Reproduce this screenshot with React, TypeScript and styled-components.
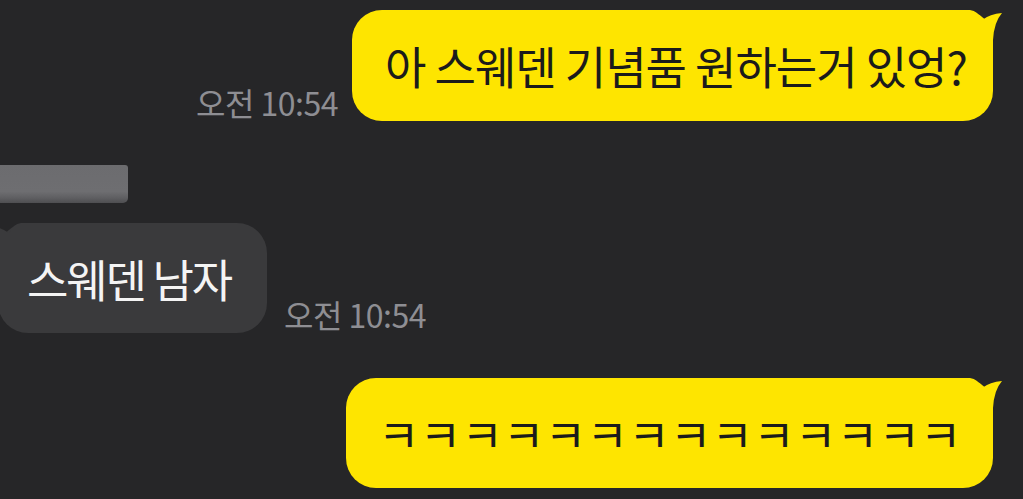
import React from "react";
import styled, { createGlobalStyle } from "styled-components";

const Global = createGlobalStyle`
  html, body { margin: 0; padding: 0; background: #262628; }
  body { font-family: "Noto Sans CJK KR", "Noto Sans", sans-serif; overflow: hidden; }
`;

const Screen = styled.div`
  width: 1023px;
  height: 499px;
  background: #262628;
  display: flex;
  flex-direction: column;
  padding-top: 10px;
  box-sizing: border-box;
  overflow: hidden;
`;

const Row = styled.div<{ $mine?: boolean; $top?: number }>`
  display: flex;
  align-items: flex-end;
  justify-content: ${(p) => (p.$mine ? "flex-end" : "flex-start")};
  gap: ${(p) => (p.$mine ? 14 : 17)}px;
  margin-top: ${(p) => p.$top ?? 0}px;
  padding-right: ${(p) => (p.$mine ? 30 : 0)}px;
  margin-left: ${(p) => (p.$mine ? 0 : -2)}px;
`;

const Bubble = styled.div<{ $mine?: boolean; $w: number; $h: number; $pad: number; $ls: number }>`
  position: relative;
  width: ${(p) => p.$w}px;
  height: ${(p) => p.$h}px;
  box-sizing: border-box;
  border-radius: 30px;
  background: ${(p) => (p.$mine ? "#fee500" : "#3a3a3c")};
  color: ${(p) => (p.$mine ? "#1b1b1b" : "#f4f4f4")};
  display: flex;
  align-items: center;
  padding-left: ${(p) => p.$pad}px;
  font-size: 45px;
  letter-spacing: ${(p) => p.$ls}px;
  white-space: nowrap;
`;

const Text = styled.span`
  position: relative;
  z-index: 1;
`;

const Tail = styled.svg<{ $mine?: boolean }>`
  position: absolute;
  top: 0;
  width: 40px;
  height: 50px;
  ${(p) => (p.$mine ? "right: -10px;" : "left: -10px; transform: scaleX(-1);")}
`;

const Time = styled.span<{ $b: number }>`
  color: #8e8e93;
  font-size: 32px;
  letter-spacing: -0.5px;
  line-height: 1;
  margin-bottom: ${(p) => p.$b}px;
  white-space: nowrap;
`;

const NameBar = styled.div`
  margin-top: 44px;
  width: 128px;
  height: 38px;
  border-radius: 0 3px 5px 0;
  background: linear-gradient(180deg, #6c6c6f 0%, #6e6e71 70%, #606063 85%, #4e4e51 100%);
`;

const TailShape: React.FC<{ mine?: boolean; color: string }> = ({ mine, color }) => (
  <Tail $mine={mine} viewBox="0 0 40 50">
    <path d="M0 0 L7 0 Q15 1 19 10 Q27 4 39 3 Q31 12 30 30 L30 50 L0 50 Z" fill={color} />
  </Tail>
);

export default function App() {
  return (
    <>
      <Global />
      <Screen>
        <Row $mine>
          <Time $b={3}>오전 10:54</Time>
          <Bubble $mine $w={641} $h={111} $pad={33} $ls={-1}>
            <TailShape mine color="#fee500" />
            <Text>아 스웨덴 기념품 원하는거 있엉?</Text>
          </Bubble>
        </Row>
        <NameBar />
        <Row $top={20}>
          <Bubble $w={269} $h={110} $pad={29} $ls={-2.2}>
            <TailShape color="#3a3a3c" />
            <Text>스웨덴 남자</Text>
          </Bubble>
          <Time $b={3}>오전 10:54</Time>
        </Row>
        <Row $mine $top={45}>
          <Bubble $mine $w={647} $h={110} $pad={32} $ls={0.3}>
            <TailShape mine color="#fee500" />
            <Text>ㅋㅋㅋㅋㅋㅋㅋㅋㅋㅋㅋㅋㅋㅋ</Text>
          </Bubble>
        </Row>
      </Screen>
    </>
  );
}
